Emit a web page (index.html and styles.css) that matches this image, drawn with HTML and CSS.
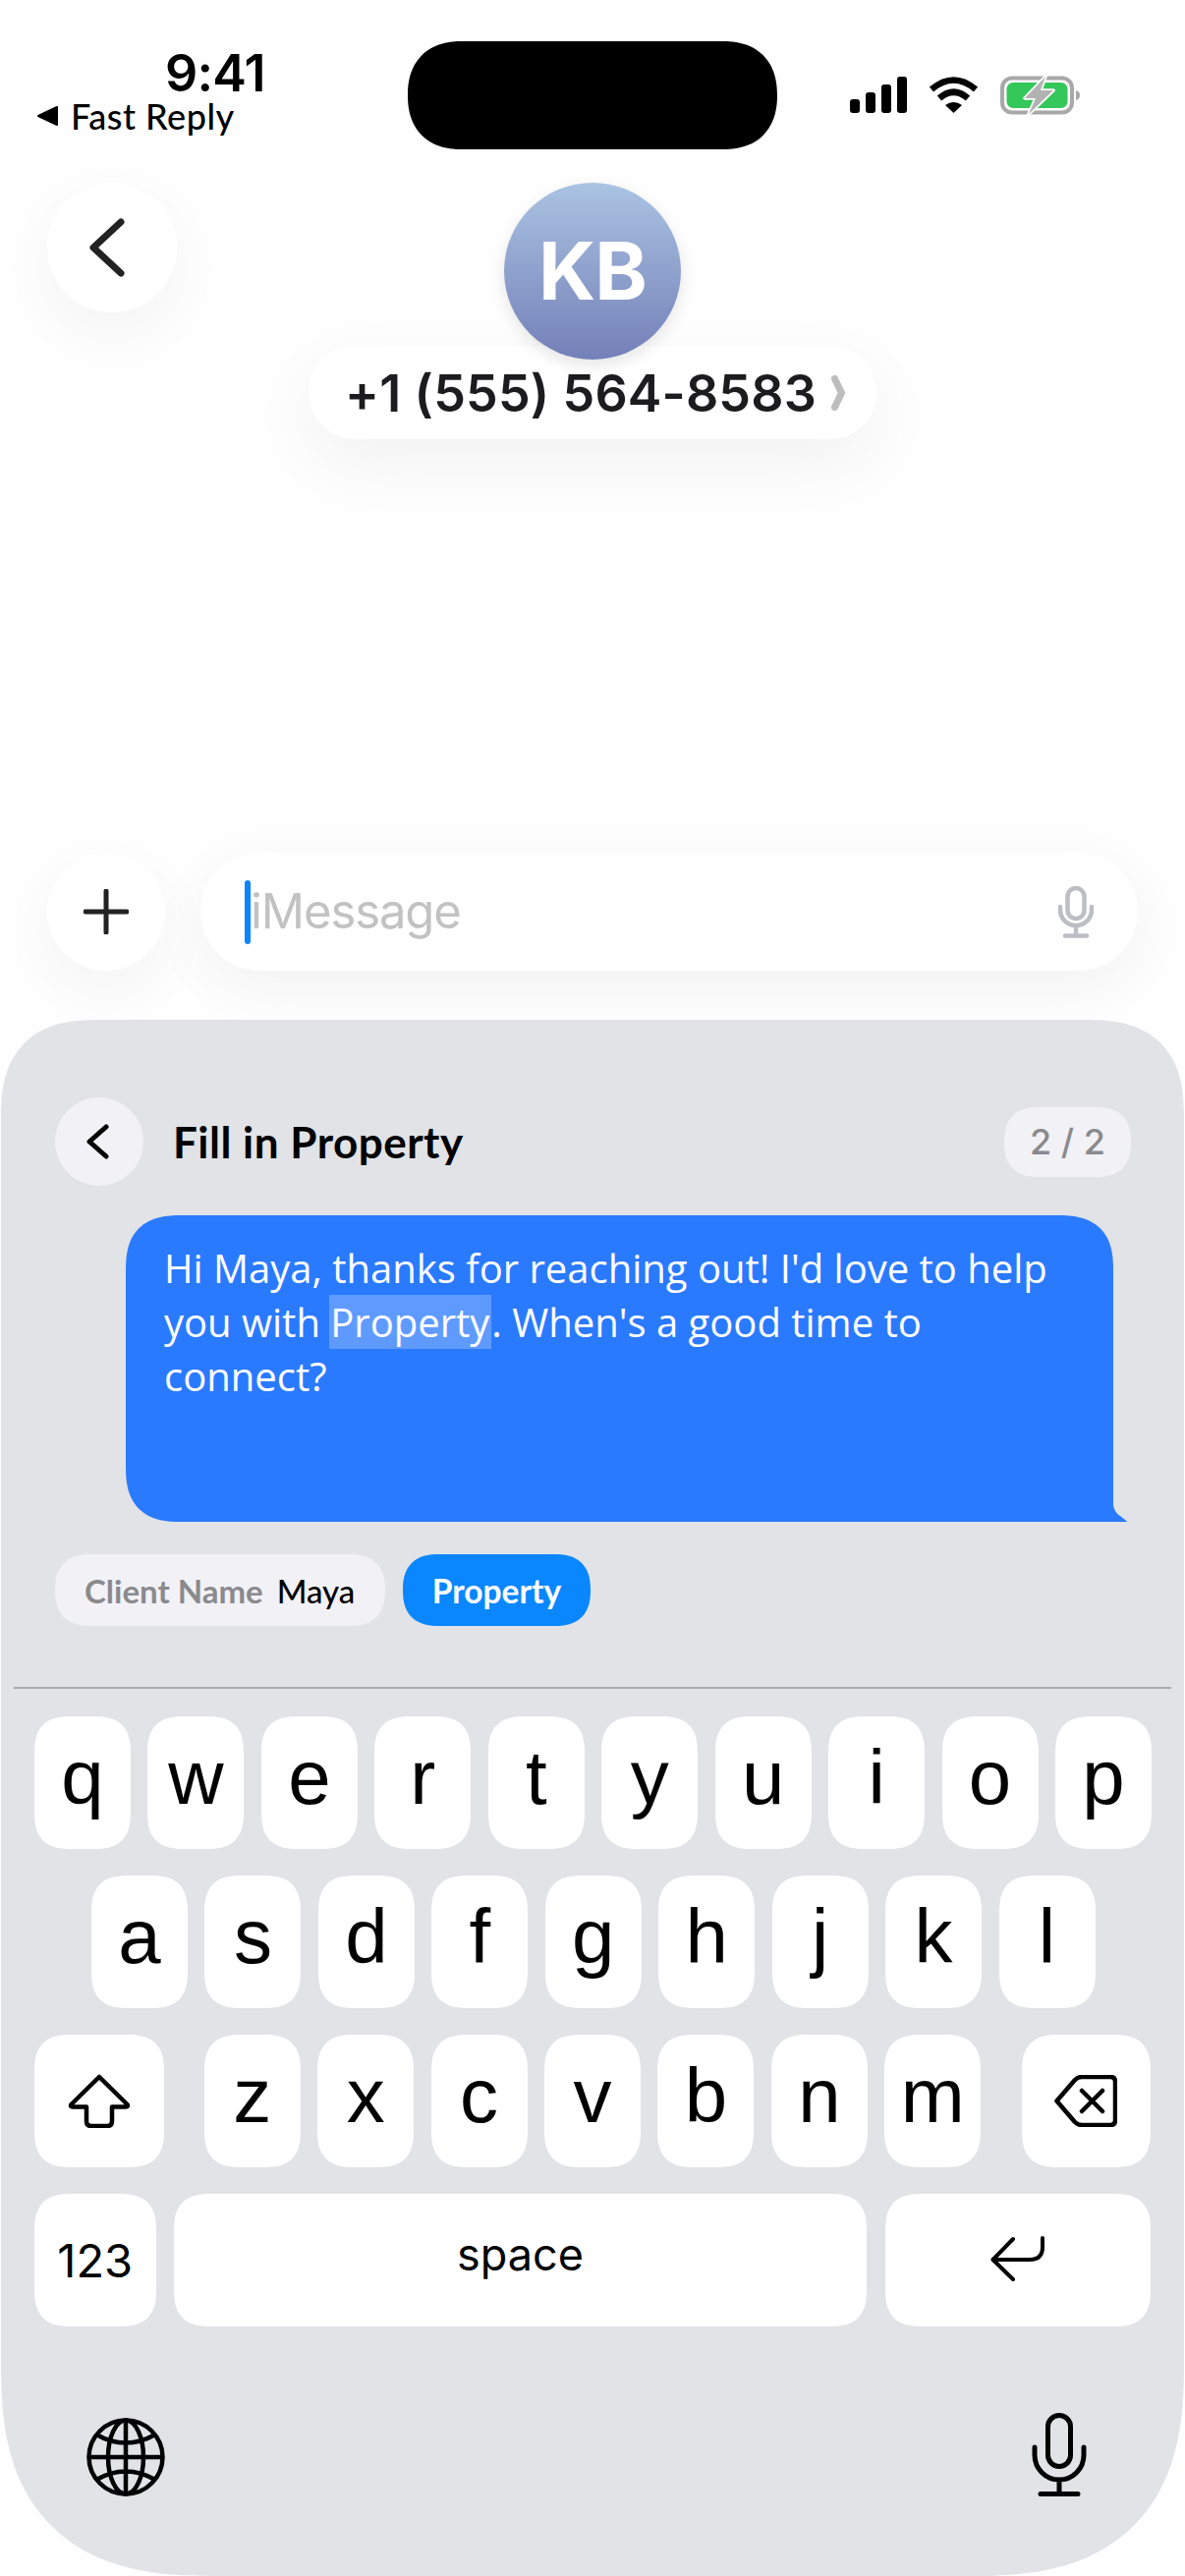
FILE: index.html
```html
<!DOCTYPE html>
<html lang="en">
<head>
<meta charset="utf-8">
<title>Fast Reply</title>
<link rel="stylesheet" href="styles.css">
</head>
<body>
<div class="phone">
  <header class="status">
    <div class="status-left">
      <div class="time">9:41</div>
      <div class="return">
        <svg class="return-arrow" viewBox="0 0 21 20"><path d="M1 10 L20 1 V19 Z"/></svg>
        <span>Fast Reply</span>
      </div>
    </div>
    <div class="island"></div>
    <div class="status-right">
      <svg class="signal" viewBox="0 0 58 37"><rect x="0" y="23" width="10" height="14" rx="3"/><rect x="16" y="16" width="10" height="21" rx="3"/><rect x="32" y="8" width="10" height="29" rx="3"/><rect x="48" y="0" width="10" height="37" rx="3"/></svg>
      <svg class="wifi" viewBox="0 0 51 37"><path class="wifi-arc" d="M3 13 Q25.5 -6 48 13"/><path class="wifi-arc" d="M11 22 Q25.5 9.500 40 22"/><path d="M17 29 Q25.500 23 34 29 L25.500 37 Z"/></svg>
      <svg class="battery" viewBox="0 0 82 40"><rect class="batt-shell" x="2" y="2.500" width="71" height="35" rx="10"/><rect class="batt-fill" x="6.500" y="7" width="62" height="26" rx="6.500"/><path class="batt-nub" d="M77 15 Q81 16 81 20 Q81 24 77 25 Z"/><path class="batt-bolt" d="M46 1 L25 23 H36 L29 39 L54 15 H41 Z"/></svg>
    </div>
  </header>

  <nav class="nav">
    <div class="nav-side">
      <button class="round back-btn"><svg class="back-icon" viewBox="0 0 40 64"><path d="M33 6 L5 32 L33 58"/></svg></button>
    </div>
    <div class="contact">
      <div class="avatar">KB</div>
      <div class="contact-pill">
        <div class="phone-num">+1 (555) 564-8583</div>
        <svg class="pill-chev" viewBox="0 0 14 36"><path d="M3.500 3.500 L10.500 18 L3.500 32.500"/></svg>
      </div>
    </div>
    <div class="nav-side"></div>
  </nav>

  <section class="composer">
    <button class="round plus-btn"><svg class="plus-icon" viewBox="0 0 46 46"><path d="M23 2 V44 M2 23 H44"/></svg></button>
    <div class="input">
      <span class="caret"></span>
      <span class="placeholder">iMessage</span>
      <svg class="input-mic" viewBox="0 0 36 53"><rect x="9.500" y="2" width="17" height="31" rx="8.500"/><path d="M2 21 V24 A16 16 0 0 0 34 24 V21 M18 40 V50 M7 50.500 H29"/></svg>
    </div>
  </section>

  <section class="sheet">
    <div class="sheet-head">
      <button class="sheet-back"><svg class="sheet-back-icon" viewBox="0 0 24 36"><path d="M21 3 L4 18 L21 33"/></svg></button>
      <h1 class="sheet-title">Fill in Property</h1>
      <div class="counter">2 / 2</div>
    </div>

    <div class="bubble">
      <p class="bubble-text">Hi Maya, thanks for reaching out! I'd love to help you with <span class="mark">Property</span>. When's a good time to connect?</p>
      <svg class="tail" viewBox="0 0 16 26"><path d="M0 0 C0 12 4 18 8 20 L15.500 26 H0 Z"/></svg>
    </div>

    <div class="chips">
      <div class="chip chip-done"><span class="chip-label">Client Name</span><span class="chip-value">Maya</span></div>
      <div class="chip chip-active">Property</div>
    </div>

    <div class="divider"></div>

    <div class="keyboard">
      <div class="row row-top">
        <div class="key">q</div><div class="key">w</div><div class="key">e</div><div class="key">r</div><div class="key">t</div><div class="key">y</div><div class="key">u</div><div class="key">i</div><div class="key">o</div><div class="key">p</div>
      </div>
      <div class="row row-mid">
        <div class="key">a</div><div class="key">s</div><div class="key">d</div><div class="key">f</div><div class="key">g</div><div class="key">h</div><div class="key">j</div><div class="key">k</div><div class="key">l</div>
      </div>
      <div class="row row-third">
        <div class="key key-fn"><svg class="shift-icon" viewBox="0 0 64 55"><path d="M32 3 L3.500 31 Q2 33.500 5 33.500 H19 V48 Q19 53 24 53 H40 Q45 53 45 48 V33.500 H59 Q62 33.500 60.500 31 Z"/></svg></div>
        <div class="letters">
          <div class="key">z</div><div class="key">x</div><div class="key">c</div><div class="key">v</div><div class="key">b</div><div class="key">n</div><div class="key">m</div>
        </div>
        <div class="key key-fn"><svg class="delete-icon" viewBox="0 0 64 53"><path d="M2.500 26.500 L21 5 Q24 2 28 2 H57 Q62 2 62 7 V46 Q62 51 57 51 H28 Q24 51 21 48 Z M28 16 L49 37 M49 16 L28 37"/></svg></div>
      </div>
      <div class="row row-bottom">
        <div class="key key-num">123</div>
        <div class="key key-space">space</div>
        <div class="key key-return"><svg class="return-icon" viewBox="0 0 55 46"><path d="M23 3 L2.500 24 L23 44 M3 24 H40 Q53 24 53 11 V2"/></svg></div>
      </div>
    </div>

    <div class="kb-foot">
      <svg class="globe" viewBox="0 0 80 80"><circle cx="40" cy="40" r="37.500"/><ellipse cx="40" cy="40" rx="18" ry="37.500"/><path d="M40 2.500 V77.500 M2.500 40 H77.500 M10 17 Q40 34 70 17 M10 63 Q40 46 70 63"/></svg>
      <svg class="kb-mic" viewBox="0 0 56 85"><rect x="16.500" y="2.500" width="23" height="52" rx="11.500"/><path d="M3 35 V43 A25 25 0 0 0 53 43 V35 M28 68 V82 M9 82.500 H47"/></svg>
    </div>
  </section>
</div>
</body>
</html>
```
FILE: styles.css
```css
* { box-sizing: border-box; }
html, body { margin: 0; padding: 0; background: #fff; }
body { font-family: "Inter", "Liberation Sans", sans-serif; color: #000; }
button { border: 0; padding: 0; font: inherit; }
svg { display: block; flex: none; }

.phone { width: 1206px; height: 2622px; display: flex; flex-direction: column; overflow: hidden; background: #fefefe; }

/* Status bar */
.status { display: flex; align-items: flex-start; padding-top: 42px; height: 152px; flex: none; }
.status-left { width: 415px; padding-left: 38px; }
.time { padding-left: 130px; font-size: 52px; font-weight: 600; line-height: 50px; letter-spacing: -0.8px; margin-top: 8px; }
.return { display: flex; align-items: center; gap: 13px; margin-top: -5px; font-family: "Lato", sans-serif; font-size: 36px; font-weight: 500; line-height: 46px; letter-spacing: 0.5px; }
.return-arrow { width: 21px; height: 20px; fill: #000; stroke: #000; stroke-width: 2; stroke-linejoin: round; }
.island { width: 376px; height: 110px; border-radius: 55px; corner-shape: superellipse(1.2); background: #000; flex: none; }
.status-right { display: flex; align-items: flex-start; margin-left: 74px; margin-top: 36px; }
.signal { width: 58px; height: 37px; fill: #000; }
.wifi { width: 51px; height: 37px; margin-left: 22px; fill: #000; }
.wifi-arc { fill: none; stroke: #000; stroke-width: 6.5; }
.battery { width: 82px; height: 40px; margin-left: 22px; margin-top: -1px; }
.batt-shell { fill: none; stroke: #a8a8a8; stroke-width: 4; }
.batt-fill { fill: #34c759; }
.batt-nub { fill: #a8a8a8; }
.batt-bolt { fill: #b2b2b2; stroke: #fff; stroke-width: 3.5; paint-order: stroke; stroke-linejoin: round; }

/* Nav */
.nav { display: grid; grid-template-columns: 1fr auto 1fr; margin-top: 34px; flex: none; }
.round { background: #fff; border-radius: 50%; display: flex; align-items: center; justify-content: center; flex: none; box-shadow: 0 20px 60px rgba(0, 0, 0, .045); }
.back-btn { width: 132px; height: 132px; margin-left: 48px; }
.back-icon { width: 40px; height: 64px; margin-right: 8px; fill: none; stroke: #222; stroke-width: 7; stroke-linecap: round; stroke-linejoin: round; }
.contact { display: flex; flex-direction: column; align-items: center; }
.avatar { position: relative; z-index: 1; width: 180px; height: 180px; border-radius: 50%; background: linear-gradient(180deg, #aac3e2 0%, #7480b8 100%); color: #fff; font-size: 81px; font-weight: 700; line-height: 180px; text-align: center; letter-spacing: -1px; box-shadow: 0 6px 16px rgba(0, 0, 0, .1); }
.contact-pill { display: flex; align-items: flex-start; height: 95px; margin-top: -14px; padding: 26px 32px 0 37px; gap: 15px; border-radius: 48px; background: #fff; box-shadow: 0 24px 70px rgba(0, 0, 0, .05); }
.phone-num { height: 49px; line-height: 46px; overflow: hidden; font-size: 52px; font-weight: 600; color: #1c1c1e; white-space: nowrap; letter-spacing: 0.15px; }
.pill-chev { width: 14px; height: 36px; margin-top: 4px; fill: none; stroke: #bdbdbd; stroke-width: 7; stroke-linecap: round; stroke-linejoin: round; }

/* Composer */
.composer { display: flex; gap: 36px; margin-top: auto; margin-bottom: 50px; padding: 0 48px; flex: none; }
.plus-btn { width: 120px; height: 120px; }
.plus-icon { width: 46px; height: 46px; fill: none; stroke: #222; stroke-width: 5; stroke-linecap: round; }
.input { flex: 1; height: 120px; border-radius: 60px; background: #fff; display: flex; align-items: center; padding: 0 45px; box-shadow: 0 16px 60px rgba(0, 0, 0, .05); }
.caret { width: 6px; height: 65px; border-radius: 3px; background: #0a84ff; flex: none; }
.placeholder { font-size: 49px; color: #c2c2c2; line-height: 60px; flex: 1; letter-spacing: -1.1px; }
.input-mic { width: 36px; height: 53px; fill: none; stroke: #bcbec4; stroke-width: 4.5; stroke-linecap: round; }

/* Sheet */
.sheet { flex: none; height: 1584px; margin: 0 1px; padding-top: 79px; background: #e1e3e7; border-radius: 100px 100px 215px 215px; corner-shape: superellipse(1.35); display: flex; flex-direction: column; }
.sheet-head { display: flex; align-items: center; padding: 0 54px 0 55px; }
.sheet-back { width: 90px; height: 90px; border-radius: 50%; background: #f2f2f6; display: flex; align-items: center; justify-content: center; flex: none; }
.sheet-back-icon { width: 24px; height: 36px; margin-right: 5px; fill: none; stroke: #000; stroke-width: 5; stroke-linecap: round; stroke-linejoin: round; }
.sheet-title { flex: 1; margin: 0 0 0 30px; font-family: "Lato", sans-serif; font-size: 44px; font-weight: 700; line-height: 60px; letter-spacing: 0.5px; }
.counter { width: 129px; height: 71px; border-radius: 36px; corner-shape: superellipse(1.3); background: #f2f2f6; color: #8a8a8e; font-size: 36px; font-weight: 500; line-height: 71px; text-align: center; }

.bubble { position: relative; margin: 30px 72px 0 127px; height: 312px; padding: 26px 60px 0 39px; background: #2a7aff; border-radius: 56px 56px 0 56px; corner-shape: superellipse(1.35); flex: none; }
.bubble-text { margin: 0; font-family: "Open Sans", sans-serif; font-size: 40px; line-height: 55px; color: #fff; letter-spacing: 0; }
.mark { background: rgba(255, 255, 255, .25); margin-left: -1px; padding: 0 2px 0 1px; }
.tail { position: absolute; right: -15px; bottom: 0; width: 16px; height: 26px; fill: #2a7aff; }

.chips { display: flex; gap: 18px; margin: 33px 0 0 55px; flex: none; }
.chip { height: 73px; border-radius: 37px; corner-shape: superellipse(1.3); display: flex; align-items: center; font-family: "Lato", sans-serif; font-size: 33px; font-weight: 500; }
.chip-done { width: 336px; padding-left: 30px; gap: 14px; background: #f2f2f6; }
.chip-label { color: #8a8a8e; font-weight: 700; }
.chip-value { color: #000; }
.chip-active { width: 191px; justify-content: center; background: #0a87ff; color: #fff; font-weight: 700; font-size: 33.500px; }

.divider { height: 2px; margin: 62px 13px 0; background: #a9abb0; flex: none; }

/* Keyboard */
.keyboard { display: flex; flex-direction: column; gap: 27px; margin-top: 28px; padding: 0 34px; flex: none; }
.row { display: flex; height: 135px; gap: 17.45px; }
.row-mid { padding-left: 58px; }
.row-third { justify-content: space-between; }
.row-bottom { gap: 18.5px; }
.letters { display: flex; gap: 17.45px; }
.key { width: 98px; height: 135px; border-radius: 38px; corner-shape: superellipse(1.4); background: #fff; display: flex; align-items: center; justify-content: center; padding-bottom: 11px; font-family: "Liberation Sans", Arial, sans-serif; font-size: 78px; line-height: 78px; color: #000; flex: none; }
.key-fn { width: 131.500px; padding-bottom: 0; }
.key-num { width: 123.500px; padding-bottom: 0; font-family: "Inter", sans-serif; font-size: 47px; font-weight: 400; }
.key-space { flex: 1; font-family: "Inter", sans-serif; font-size: 45px; font-weight: 400; }
.key-return { width: 270.500px; padding-bottom: 0; }
.shift-icon { width: 64px; height: 55px; fill: none; stroke: #000; stroke-width: 4.5; stroke-linejoin: round; }
.delete-icon { width: 64px; height: 53px; margin-top: -1px; fill: none; stroke: #000; stroke-width: 4.5; stroke-linecap: round; stroke-linejoin: round; }
.return-icon { width: 55px; height: 46px; margin-top: -3px; fill: none; stroke: #000; stroke-width: 4; stroke-linecap: round; stroke-linejoin: round; }

.kb-foot { display: flex; justify-content: space-between; align-items: flex-end; margin-top: auto; padding: 0 99px 81px 87px; flex: none; }
.globe { width: 80px; height: 80px; fill: none; stroke: #000; stroke-width: 4.500; }
.kb-mic { width: 56px; height: 85px; fill: none; stroke: #000; stroke-width: 5; stroke-linecap: round; }
```
